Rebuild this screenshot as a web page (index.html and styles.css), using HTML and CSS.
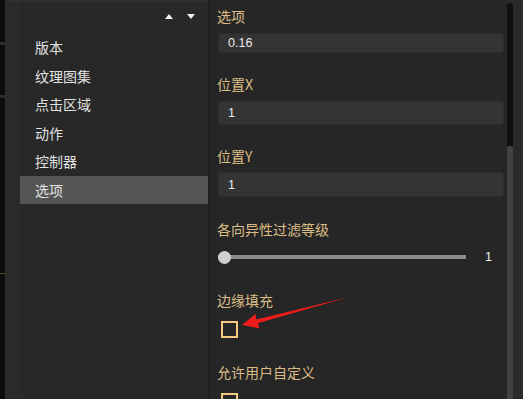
FILE: index.html
```html
<!DOCTYPE html>
<html lang="zh-CN">
<head>
  <meta charset="UTF-8">
  <meta name="viewport" content="width=device-width, initial-scale=1.0">
  <title>属性面板</title>
  <link rel="stylesheet" href="styles.css">
</head>
<body>

  <!-- Window behind the panel -->
  <div class="backdrop">
    <span class="mark mark-a"></span>
    <span class="mark mark-b"></span>
    <span class="mark mark-c"></span>
  </div>
  <div class="gutter"></div>

  <!-- Section list -->
  <nav class="nav">
    <div class="nav-head">
      <span class="tri tri-up"></span>
      <span class="tri tri-down"></span>
    </div>
    <div class="nav-item">版本</div>
    <div class="nav-item">纹理图集</div>
    <div class="nav-item">点击区域</div>
    <div class="nav-item">动作</div>
    <div class="nav-item">控制器</div>
    <div class="nav-item active">选项</div>
  </nav>

  <div class="divider"></div>

  <!-- Options -->
  <main class="inspector">
    <div class="label first">选项</div>
    <div class="input short">0.16</div>

    <div class="label">位置X</div>
    <div class="input">1</div>

    <div class="label">位置Y</div>
    <div class="input tall">1</div>

    <div class="label slider-label">各向异性过滤等级</div>
    <div class="slider-row">
      <div class="slider">
        <div class="slider-thumb"></div>
      </div>
      <span class="slider-value">1</span>
    </div>

    <div class="label check-label">边缘填充</div>
    <div class="checkbox"></div>

    <div class="label check-label">允许用户自定义</div>
    <div class="checkbox"></div>
  </main>

  <div class="scroll">
    <div class="scroll-track"></div>
    <div class="scroll-thumb"></div>
  </div>

  <!-- Red annotation arrow -->
  <svg class="annotation" width="523" height="399" viewBox="0 0 523 399">
    <polygon points="242,325 255.5,314 256.5,319.5 349,297 257.8,323.2 259.5,328.5" fill="#f01c1c"/>
  </svg>

</body>
</html>
```

FILE: styles.css
```css
body {
  margin: 0;
  height: 399px;
  display: flex;
  background-color: #262626;
  font-family: "Noto Sans CJK SC", "Liberation Sans", sans-serif;
  font-size: 14px;
  color: #e4e4e4;
  overflow: hidden;
  position: relative;
}

/* Dark window peeking out on the left */
.backdrop {
  width: 5px;
  background-color: #0b0d0b;
  display: flex;
  flex-direction: column;
}

.mark {
  display: block;
  height: 3px;
  background-color: #2c2c2c;
}

.mark-a { margin-top: 42px; }
.mark-b { margin-top: 50px; }
.mark-c { margin-top: 175px; background-color: #5a4a2a; height: 1px; }

.gutter {
  width: 15px;
  background-color: #2a2a2a;
  border-top: 2px solid #303030;
}

/* Section list */
.nav {
  width: 188px;
  background-color: #282828;
  border-top: 2px solid #2e2e2e;
}

.nav-head {
  height: 31px;
  display: flex;
  justify-content: flex-end;
  align-items: flex-start;
  gap: 14px;
  padding-right: 13px;
}

.tri {
  width: 0;
  height: 0;
  margin-top: 12px;
  border-left: 4.5px solid transparent;
  border-right: 4.5px solid transparent;
}

.tri-up { border-bottom: 5px solid #f2f2f2; }
.tri-down { border-top: 5px solid #f2f2f2; }

.nav-item {
  height: 28.5px;
  line-height: 28.5px;
  padding-left: 15px;
  color: #e2e2e2;
}

.nav-item.active {
  background-color: #555555;
}

.divider {
  width: 2px;
  background-color: #1f1f1f;
}

/* Options */
.inspector {
  flex: 1;
  padding: 0 2px 0 7px;
}

.label {
  height: 20px;
  line-height: 20px;
  margin-top: 21px;
  color: #dcbd86;
}

.label.first { margin-top: 6px; }
.slider-label { margin-top: 22px; }
.check-label { margin-top: 25px; }
.check-label + .checkbox + .check-label { margin-top: 24px; }

.input {
  box-sizing: border-box;
  height: 24px;
  margin: 7px 0 0 1px;
  padding-left: 9px;
  background-color: #343434;
  border: 1px solid #2d2d2d;
  border-radius: 3px;
  font-family: "Liberation Sans", "Noto Sans CJK SC", sans-serif;
  font-size: 12.5px;
  color: #ececec;
  display: flex;
  align-items: center;
}

.input.short { height: 20px; }
.input.tall { height: 25px; margin-top: 6px; }

.slider-row {
  margin-top: 10px;
  height: 16px;
  display: flex;
  align-items: center;
}

.slider {
  position: relative;
  margin-left: 1px;
  width: 248px;
  height: 4px;
  background-color: #8a8a8a;
}

.slider-thumb {
  position: absolute;
  left: 0;
  top: -4.5px;
  width: 13px;
  height: 13px;
  border-radius: 50%;
  background-color: #cfcfcf;
}

.slider-value {
  margin-left: 19px;
  font-family: "Liberation Sans", sans-serif;
  font-size: 12.5px;
  color: #ececec;
}

.checkbox {
  box-sizing: border-box;
  width: 17px;
  height: 17px;
  margin: 11px 0 0 4px;
  border: 2px solid #f6c97f;
}

/* Scrollbar */
.scroll {
  width: 17px;
  background-color: #2a2a2a;
  border-left: 1px solid #262626;
  box-sizing: border-box;
}

.scroll-track {
  width: 6px;
  height: 143px;
  margin-top: 3px;
  background-color: #101010;
  border-radius: 3px 3px 0 0;
}

.scroll-thumb {
  width: 6px;
  height: 260px;
  background-color: #414141;
  border-radius: 3px 3px 0 0;
}

.annotation {
  position: absolute;
  left: 0;
  top: 0;
  pointer-events: none;
}
```
